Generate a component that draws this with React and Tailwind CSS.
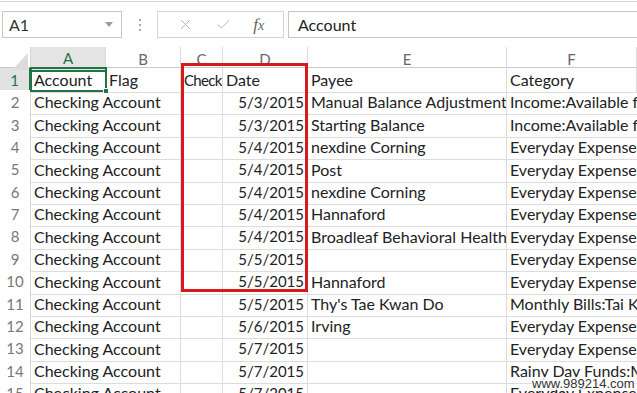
import React from "react";
import { X, Check } from "lucide-react";

const rows = [
  ["Account", "Flag", "Check", "Date", "Payee", "Category"],
  ["Checking Account", "", "", "5/3/2015", "Manual Balance Adjustment", "Income:Available for March"],
  ["Checking Account", "", "", "5/3/2015", "Starting Balance", "Income:Available for March"],
  ["Checking Account", "", "", "5/4/2015", "nexdine Corning", "Everyday Expenses:Dining"],
  ["Checking Account", "", "", "5/4/2015", "Post", "Everyday Expenses:Dining"],
  ["Checking Account", "", "", "5/4/2015", "nexdine Corning", "Everyday Expenses:Dining"],
  ["Checking Account", "", "", "5/4/2015", "Hannaford", "Everyday Expenses:Groceries"],
  ["Checking Account", "", "", "5/4/2015", "Broadleaf Behavioral Health", "Everyday Expenses:Medical"],
  ["Checking Account", "", "", "5/5/2015", "", "Everyday Expenses:Groceries"],
  ["Checking Account", "", "", "5/5/2015", "Hannaford", "Everyday Expenses:Groceries"],
  ["Checking Account", "", "", "5/5/2015", "Thy's Tae Kwan Do", "Monthly Bills:Tai Kwan Do"],
  ["Checking Account", "", "", "5/6/2015", "Irving", "Everyday Expenses:Fuel"],
  ["Checking Account", "", "", "5/7/2015", "", "Everyday Expenses:Groceries"],
  ["Checking Account", "", "", "5/7/2015", "", "Rainy Day Funds:Medical"],
  ["Checking Account", "", "", "5/7/2015", "", "Everyday Expenses:Groceries"],
];

const cols = ["A", "B", "C", "D", "E", "F"];
const gridCols = "grid grid-cols-[31px_75px_75px_42px_85px_199px_1fr]";

function Cell({ children, right, clip, noRight, tight, small }) {
  return (
    <div
      className={
        "relative border-b border-[#dcdcdc] flex items-center whitespace-nowrap " +
        (noRight ? "" : "border-r ") +
        (right ? "justify-end pr-[3px] " : "pl-[3px] ") +
        (clip ? "overflow-hidden " : "overflow-visible ") +
        (tight ? "tracking-[-0.7px] text-[15px] " : "") +
        (small ? "text-[15px]" : "")
      }
    >
      <span className="relative z-10">{children}</span>
    </div>
  );
}

export default function App() {
  return (
    <div
      className="relative w-[637px] h-[393px] overflow-hidden bg-white text-[#222]"
      style={{ fontFamily: "Lato, 'Open Sans', sans-serif" }}
    >
      {/* ribbon edge */}
      <div className="h-[2px] border-b border-[#d6d6d6]" />
      {/* formula bar */}
      <div className="h-[45px] flex items-start pt-[9px]">
        <div className="ml-[2px] w-[120px] h-[27px] border border-[#c6c6c6] flex items-center pl-[6px] pr-[8px] justify-between">
          <span className="text-[16px] text-[#333]">A1</span>
          <svg width="8" height="5" viewBox="0 0 8 5">
            <path d="M0 0 L8 0 L4 5 Z" fill="#9a9a9a" />
          </svg>
        </div>
        <div className="w-[35px] h-[27px] flex flex-col items-center justify-center gap-[3px]">
          <div className="w-[2px] h-[2px] bg-[#a8a8a8]" />
          <div className="w-[2px] h-[2px] bg-[#a8a8a8]" />
          <div className="w-[2px] h-[2px] bg-[#a8a8a8]" />
        </div>
        <div className="w-[127px] h-[27px] border border-[#d4d4d4] flex items-center justify-around px-[8px]">
          <X size={17} strokeWidth={1.4} color="#b4b4b4" />
          <Check size={17} strokeWidth={1.4} color="#b4b4b4" />
          <span
            className="text-[17px] italic text-[#666]"
            style={{ fontFamily: "'Liberation Serif', serif" }}
          >
            f<span className="text-[14px]">x</span>
          </span>
        </div>
        <div className="ml-[4px] flex-1 h-[27px] border border-[#c6c6c6] border-r-0 flex items-center pl-[9px]">
          <span className="text-[16px] text-[#222]">Account</span>
        </div>
      </div>

      {/* column headers */}
      <div className={gridCols + " h-[21px] bg-white border-b border-[#c8c8c8]"}>
        <div className="relative border-r border-[#d6d6d6]">
          <svg className="absolute right-[2px] bottom-[2px]" width="16" height="17" viewBox="0 0 16 17">
            <path d="M16 0 L16 17 L0 17 Z" fill="#dcdcdc" />
          </svg>
        </div>
        {cols.map((c) => (
          <div
            key={c}
            className={
              "flex items-center justify-center text-[15px] border-r border-[#dcdcdc] " +
              (c === "A" ? "bg-[#e4e4e4] text-[#217346] border-b-2 border-b-[#217346]" : "text-[#666]")
            }
          >
            {c}
          </div>
        ))}
      </div>

      {/* rows */}
      {rows.map((r, i) => (
        <div key={i} className={gridCols + " h-[22.4px] text-[16px]"}>
          <div
            className={
              "flex items-center justify-center text-[15px] border-r border-b border-[#d6d6d6] " +
              (i === 0 ? "bg-[#e2e2e2] text-[#217346] border-r-2 border-r-[#217346]" : "bg-white text-[#777]")
            }
          >
            {i + 1}
          </div>
          <Cell clip={i === 0} noRight={i !== 0}>{r[0]}</Cell>
          <Cell>{r[1]}</Cell>
          <Cell clip tight={i === 0}>{r[2]}</Cell>
          <Cell right={i !== 0} small={i !== 0}>{r[3]}</Cell>
          <Cell clip>{r[4]}</Cell>
          <Cell>{r[5]}</Cell>
        </div>
      ))}

      {/* selected cell A1 */}
      <div className="absolute left-[30px] top-[67px] w-[77px] h-[25px] border-2 border-[#217346] pointer-events-none z-20">
        <div className="absolute right-[-4px] bottom-[-4px] w-[6px] h-[6px] bg-[#217346] border border-white" />
      </div>

      {/* red annotation rectangle */}
      <div className="absolute left-[181px] top-[63px] w-[127px] h-[229px] border-[3px] border-[#d7191c] pointer-events-none z-20" />

      {/* watermark */}
      <div
        className="absolute left-[531px] top-[377px] text-[13px] leading-[13px] text-[#333] bg-white/80 px-[1px] z-30"
        style={{ fontFamily: "'Liberation Sans', sans-serif" }}
      >
        www.989214.com
      </div>
    </div>
  );
}
